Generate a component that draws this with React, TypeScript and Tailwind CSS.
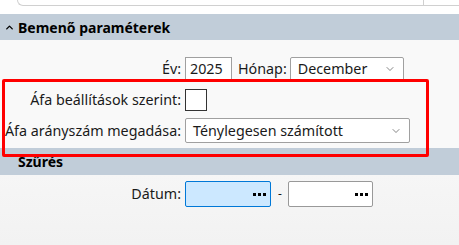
import { ChevronDown, ChevronUp } from 'lucide-react';

const font = { fontFamily: '"Segoe UI", "Noto Sans", "Open Sans", sans-serif' };

function Dots(): JSX.Element {
  return (
    <span className="flex gap-[2px]">
      <span className="h-[3px] w-[3px] bg-black" />
      <span className="h-[3px] w-[3px] bg-black" />
      <span className="h-[3px] w-[3px] bg-black" />
    </span>
  );
}

function Row({ label, children, className }: { label: string; children: React.ReactNode; className?: string }): JSX.Element {
  return (
    <div className={`flex items-center ${className ?? ''}`}>
      <span className="w-[185px] pr-[4px] text-right">{label}</span>
      {children}
    </div>
  );
}

export default function App(): JSX.Element {
  return (
    <div className="relative h-[245px] w-[459px] overflow-hidden bg-white text-[14.3px] text-[#1a1a1a]" style={font}>
      {/* previous panel edge */}
      <div className="flex h-[14px] bg-white">
        <div className="ml-[17px] flex h-[6px] flex-1 border-b border-l border-[#d0d0d0] rounded-bl-[6px]">
          <div className="ml-auto mr-[35px] h-full border-l border-[#d0d0d0]" />
        </div>
      </div>

      {/* Bemenő paraméterek */}
      <div className="flex h-[26px] items-center gap-[3px] bg-[#c1cdd9] pl-[4px] text-[14px] font-bold text-black">
        <ChevronUp size={11} strokeWidth={3} />
        <span>Bemenő paraméterek</span>
      </div>
      <div className="flex h-[108px] flex-col bg-[#f9f9f9] pt-[17px]">
        <div className="flex items-center">
          <span className="w-[185px] pr-[4px] text-right">Év:</span>
          <div className="flex h-[24px] w-[47px] items-center border border-[#a0a0a0] bg-white px-[4px]">2025</div>
          <span className="ml-[6px] mr-[3px]">Hónap:</span>
          <div className="flex h-[24px] w-[114px] items-center justify-between rounded-[2px] border border-[#a0a0a0] bg-white px-[7px]">
            <span>December</span>
            <ChevronDown size={12} strokeWidth={1.3} className="text-[#444]" />
          </div>
        </div>
        <Row label="Áfa beállítások szerint:" className="mt-[8px]">
          <div className="h-[22px] w-[22px] border border-[#333] bg-white" />
        </Row>
        <Row label="Áfa arányszám megadása:" className="mt-[7px]">
          <div className="flex h-[25px] w-[225px] items-center justify-between rounded-[2px] border border-[#a0a0a0] bg-white px-[7px]">
            <span>Ténylegesen számított</span>
            <ChevronDown size={12} strokeWidth={1.3} className="text-[#444]" />
          </div>
        </Row>
      </div>

      {/* Szűrés */}
      <div className="flex h-[27px] items-center bg-[#c1cdd9] pl-[18px] text-[14px] font-bold text-black">
        <span>Szűrés</span>
      </div>
      <div className="h-[70px] bg-gradient-to-b from-[#f6f6f6] to-[#f2f2f2] pt-[6px]">
        <Row label="Dátum:">
          <div className="flex h-[26px] w-[86px] items-center justify-end rounded-[2px] border border-[#0078d7] bg-[#cce8ff] pr-[4px]">
            <Dots />
          </div>
          <span className="ml-[7px] mr-[6px] text-[12px]">-</span>
          <div className="flex h-[26px] w-[85px] items-center justify-end rounded-[2px] border border-[#999] bg-white pr-[4px]">
            <Dots />
          </div>
        </Row>
      </div>

      {/* highlight */}
      <div className="absolute left-[2px] top-[79px] h-[78px] w-[427px] rounded-[2px] border-[3px] border-[#ff0000]" />
    </div>
  );
}
